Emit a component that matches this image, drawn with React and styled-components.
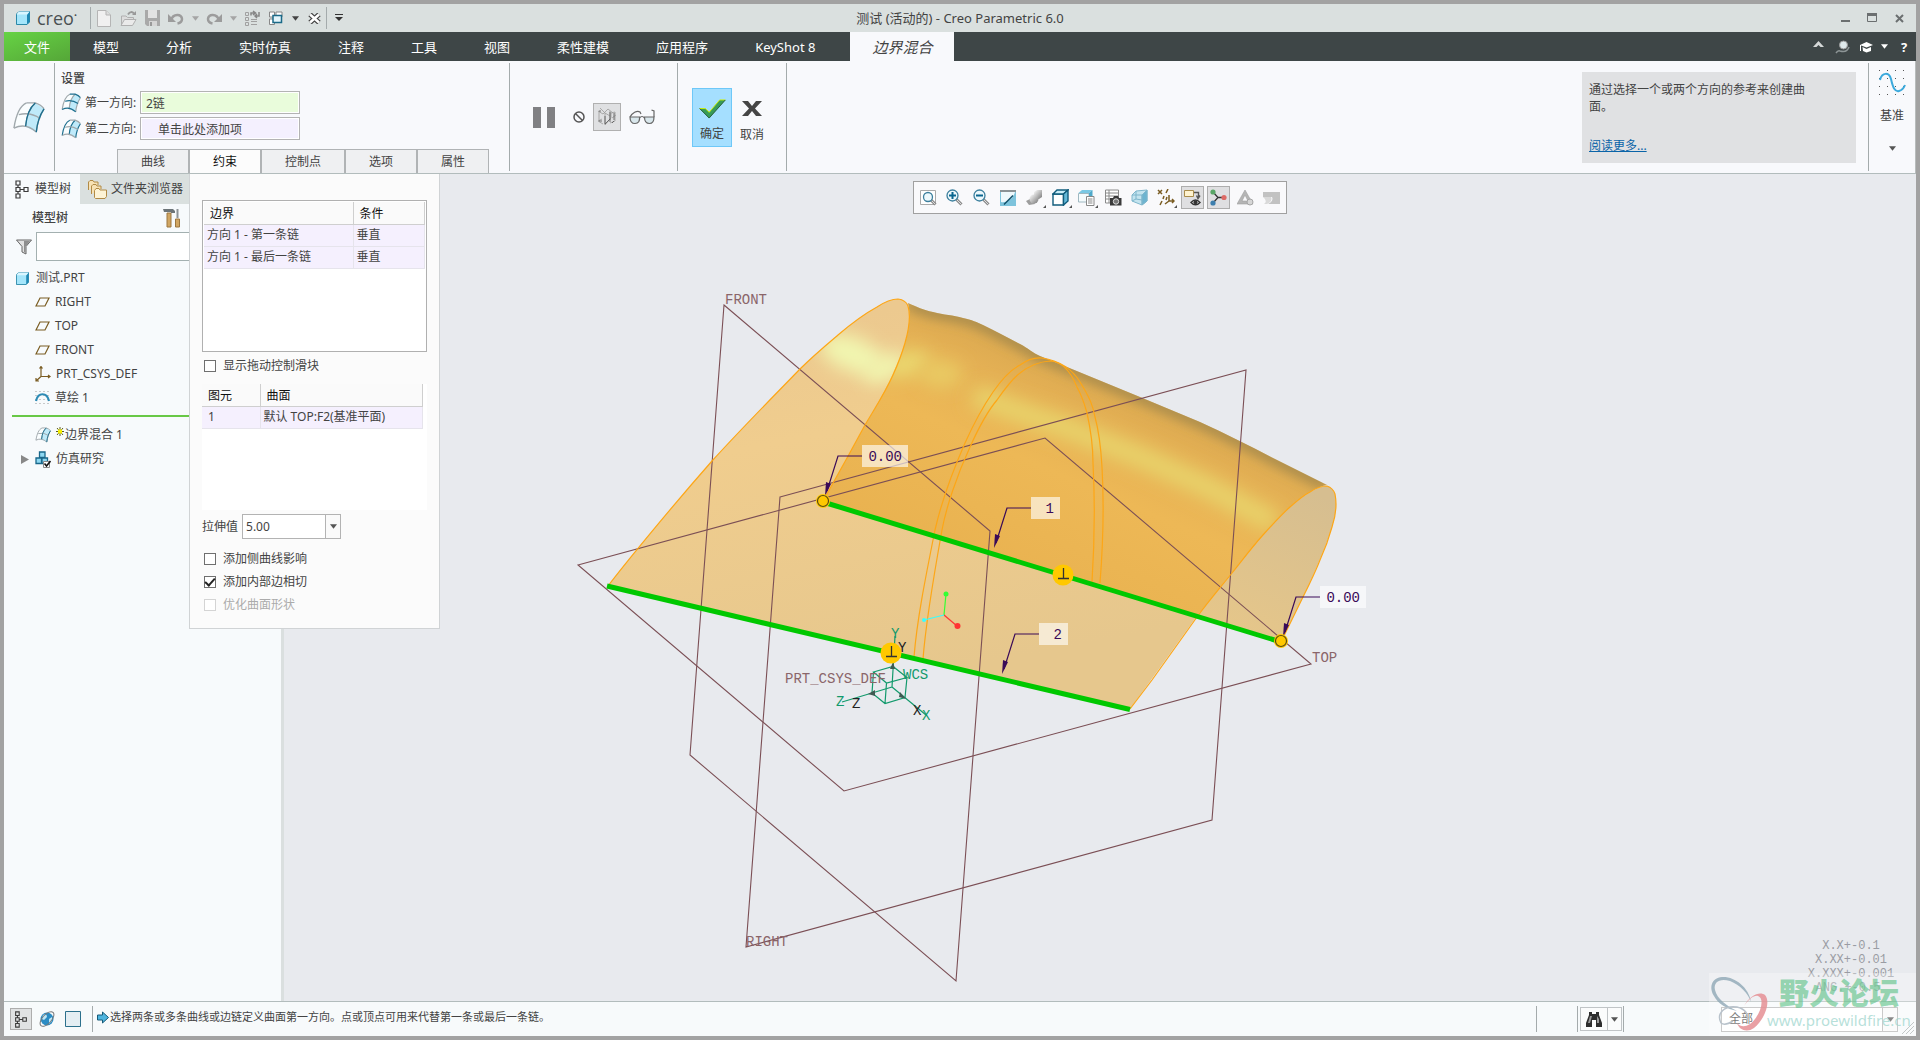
import React from "react";
import styled, { createGlobalStyle, css } from "styled-components";

const GlobalStyle = createGlobalStyle`
  * {
    box-sizing: border-box;
  }
  body {
    margin: 0;
    background: #a2a2a2;
    color: #434343;
    font: 12px/16px "Noto Sans", "Noto Sans CJK SC", sans-serif;
  }
  button, input, select {
    font: inherit;
    color: inherit;
    border-radius: 0;
  }
  button {
    padding: 0;
    border: 0;
    background: none;
  }
  svg {
    display: block;
    flex: none;
  }
`;

const Window = styled.div`
  position: relative;
  display: flex;
  flex-direction: column;
  min-height: 100vh;
  border: 4px solid #a2a2a2;
  background: #e8eaee;
`;

/* ---------- title bar ---------- */

const TitleBar = styled.header`
  display: grid;
  grid-template-columns: 1fr auto 1fr;
  align-items: center;
  height: 28px;
  background: #dae0df;
`;

const QuickAccess = styled.div`
  display: flex;
  align-items: center;
  padding-left: 12px;
`;

const Brand = styled.span`
  width: 52px;
  margin-left: 7px;
  font: 18px/26px "Open Sans", sans-serif;
  color: #4a5052;
  sup {
    font-size: 8px;
    line-height: 0;
  }
`;

const ToolButton = styled.button`
  display: flex;
  align-items: center;
  justify-content: center;
  width: ${(p) => p.$w || 24}px;
  height: 24px;
`;

const Rule = styled.span`
  align-self: stretch;
  width: 1px;
  margin: 2px ${(p) => p.$gap || 0}px;
  background: #a4abac;
`;

const WindowTitle = styled.h1`
  margin: 0;
  font-size: 13px;
  font-weight: 400;
`;

const WindowControls = styled.div`
  display: flex;
  justify-content: flex-end;
  gap: 3px;
  padding-right: 5px;
`;

/* ---------- ribbon tabs ---------- */

const TabStrip = styled.nav`
  display: flex;
  height: 29px;
  background: #3e4647;
  font-size: 13px;
  color: #fff;
`;

const FileTab = styled.button`
  width: 66px;
  margin-right: 23px;
  background: linear-gradient(160deg, #66d344, #55a638);
`;

const RibbonTab = styled.button`
  margin-right: 47px;
`;

const ActiveRibbonTab = styled.button`
  width: 104px;
  margin-left: -12px;
  font-size: 15px;
  font-style: italic;
  color: #434343;
  background: #f8f9fc;
`;

const TabTools = styled.div`
  display: flex;
  align-items: center;
  margin-left: auto;
`;

/* ---------- ribbon ---------- */

const Ribbon = styled.section`
  display: flex;
  height: 113px;
  border-bottom: 1px solid #b2bcbc;
  background: #f8f9fc;
`;

const Group = styled.div`
  display: flex;
  align-items: center;
  width: ${(p) => p.$w}px;
  padding-left: ${(p) => p.$pad || 0}px;
  gap: ${(p) => p.$gap || 0}px;
`;

const Settings = styled.div`
  display: flex;
  flex-direction: column;
  width: 454px;
  padding: 10px 0 0 6px;
`;

const SettingsTitle = styled.h2`
  margin: 0 0 4px;
  font-size: 12px;
  line-height: 16px;
  font-weight: 500;
`;

const Field = styled.label`
  display: flex;
  align-items: center;
  gap: 4px;
  height: 23px;
  margin-bottom: 3px;
  span {
    width: 51px;
    white-space: nowrap;
  }
`;

const Collector = styled.input`
  width: 160px;
  height: 23px;
  padding: 0 ${(p) => (p.$empty ? 17 : 5)}px;
  border: 1px solid #b3b3b3;
  box-shadow: inset 0 0 0 1px #fff;
  background: ${(p) => (p.$empty ? "#f4f0fe" : "#e9fcdb")};
`;

const SubTabs = styled.div`
  display: flex;
  margin: auto 0 0 56px;
`;

const SubTab = styled.button`
  width: ${(p) => p.$w || 72}px;
  height: 24px;
  border: 1px solid #b0b3b5;
  border-bottom: 0;
  background: ${(p) => (p.$active ? "#fcfcfc" : "#eff0f2")};
  color: ${(p) => (p.$active ? "#111" : "#434343")};
`;

const PreviewToggle = styled.button`
  display: flex;
  align-items: center;
  justify-content: center;
  width: 28px;
  height: 28px;
  border: 1px solid #b0b0b0;
  background: #dfe0e2;
`;

const Decision = styled.button`
  display: flex;
  flex-direction: column;
  align-items: center;
  justify-content: space-between;
  width: 40px;
  height: 59px;
  padding: 10px 0 4px;
  ${(p) =>
    p.$primary &&
    css`
      border: 1px solid #6ec8f8;
      background: #a5dfff;
    `}
`;

const HelpBox = styled.aside`
  width: 274px;
  height: 91px;
  margin: 11px 12px 0 auto;
  padding: 9px 48px 0 7px;
  line-height: 17px;
  background: #e0e1e3;
  p {
    margin: 0 0 22px;
  }
  a {
    color: #0a64a8;
  }
`;

const DatumButton = styled.button`
  display: flex;
  flex-direction: column;
  align-items: center;
  width: 47px;
  padding-top: 8px;
  gap: 11px;
  border-right: 1px solid #b8bcbc;
`;

/* ---------- work area ---------- */

const Workspace = styled.main`
  position: relative;
  display: flex;
  flex: 1;
`;

const Navigator = styled.section`
  width: 280px;
  border-right: 3px solid #dadfdf;
  background: #f7fafc;
`;

const NavTabs = styled.div`
  display: flex;
  height: 30px;
  background: #dae0df;
`;

const NavTab = styled.button`
  display: flex;
  align-items: center;
  gap: ${(p) => (p.$active ? 6 : 4)}px;
  padding: 0 ${(p) => (p.$active ? 9 : 7)}px 0 ${(p) => (p.$active ? 11 : 8)}px;
  background: ${(p) => (p.$active ? "#f7fafc" : "transparent")};
`;

const NavHeader = styled.div`
  display: flex;
  align-items: center;
  width: 176px;
  height: 28px;
  padding-left: 28px;
  h2 {
    flex: 1;
    margin: 0;
    font-size: 12px;
    font-weight: 500;
  }
`;

const FilterRow = styled.label`
  display: flex;
  align-items: center;
  gap: 4px;
  padding-left: 12px;
  margin-bottom: 5px;
  input {
    flex: 1;
    min-width: 0;
    height: 29px;
    border: 1px solid #a3b0b0;
    background: #fff;
  }
`;

const Tree = styled.ul`
  margin: 0;
  padding: 0;
  list-style: none;
`;

const TreeItem = styled.li`
  display: flex;
  align-items: center;
  gap: ${(p) => (p.$root ? 7 : 5)}px;
  height: 24px;
  padding-left: ${(p) => (p.$expandable ? 16 : p.$root ? 12 : 31)}px;
`;

const InsertMark = styled.li`
  height: 2px;
  margin: 5px 0 6px 8px;
  background: #68c846;
`;

const NewMark = styled.span`
  display: flex;
  align-items: flex-start;
  gap: 1px;
`;

/* ---------- constraints panel ---------- */

const Panel = styled.section`
  position: absolute;
  top: 0;
  left: 185px;
  width: 251px;
  padding: 26px 12px 12px;
  border: 1px solid #d0d3d5;
  border-top: 0;
  background: #fbfbfb;
`;

const TableBox = styled.div`
  height: ${(p) => p.$h}px;
  margin-bottom: ${(p) => (p.$framed ? 2 : 4)}px;
  padding: ${(p) => (p.$framed ? "1px" : "0")};
  border: ${(p) => (p.$framed ? "1px solid #b0b0b0" : "0")};
  background: ${(p) =>
    p.$framed ? "#fff" : "linear-gradient(#fbfbfb 22px, #fff 22px)"};
`;

const Grid = styled.table`
  width: 100%;
  table-layout: fixed;
  border-collapse: collapse;
  text-align: left;
  tr {
    height: 22px;
  }
  th {
    padding: 2px 6px 0;
    font-weight: 400;
    color: #111;
    background: #fafafa;
    border-right: 1px solid #cfcfcf;
    border-bottom: 1px solid #cfcfcf;
  }
  td {
    padding: 0 3px;
    background: #f5f0fe;
    border-right: 1px solid #e6e4ec;
    border-bottom: 1px solid #e6e4ec;
    white-space: nowrap;
  }
  td:last-child {
    background: #fff;
    border: 0;
  }
`;

const Check = styled.label`
  display: flex;
  align-items: center;
  gap: 7px;
  height: 23px;
  padding-left: 2px;
  color: ${(p) => (p.$off ? "#ababab" : "#434343")};
  & + ${TableBox} {
    margin-top: 7px;
  }
  input {
    appearance: none;
    display: grid;
    place-items: center;
    width: 12px;
    height: 12px;
    margin: 0;
    border: 1px solid ${(p) => (p.$off ? "#d4d4d4" : "#6f6f6f")};
    background: #fff;
  }
  input:checked::before {
    content: "";
    width: 4px;
    height: 8px;
    border: solid #222;
    border-width: 0 2px 2px 0;
    transform: translateY(-1px) rotate(42deg);
  }
`;

const CheckList = styled.div`
  margin-top: 8px;
`;

const SelectRow = styled.label`
  display: flex;
  align-items: center;
  gap: 4px;
`;

const SelectBox = styled.span`
  display: flex;
  width: ${(p) => p.$w}px;
  height: 25px;
  border: 1px solid #b3b3b3;
  background: #fff;
  select {
    flex: 1;
    appearance: none;
    min-width: 0;
    padding: 0 ${(p) => p.$pad || 3}px;
    border: 0;
    background: none;
  }
  i {
    display: flex;
    align-items: center;
    justify-content: center;
    width: 15px;
    border-left: 1px solid #b3b3b3;
    background: #fafafa;
  }
`;

/* ---------- graphics area ---------- */

const Viewport = styled.section`
  position: relative;
  flex: 1;
  min-width: 0;
  background: #e8eaee;
`;

const Scene = styled.svg`
  width: 100%;
  height: 100%;
  text {
    font-family: "Liberation Mono", monospace;
    font-size: 14px;
  }
`;

const ViewTools = styled.div`
  position: absolute;
  top: 7px;
  left: 50%;
  transform: translateX(-50%);
  display: flex;
  align-items: center;
  justify-content: space-between;
  width: 374px;
  height: 33px;
  padding: 0 3px;
  border: 1px solid #a0a0a0;
  background: #f9f9fb;
`;

const ViewButton = styled.button`
  position: relative;
  display: flex;
  align-items: center;
  justify-content: center;
  width: 23px;
  height: 23px;
  border: 1px solid ${(p) => (p.$on ? "#adadad" : "transparent")};
  background: ${(p) => (p.$on ? "#dfdfe1" : "transparent")};
  ${(p) =>
    p.$menu &&
    css`
      &::after {
        content: "";
        position: absolute;
        right: -1px;
        bottom: 0;
        border: solid transparent;
        border-width: 0 0 3px 3px;
        border-bottom-color: #555;
      }
    `}
`;

/* ---------- status bar ---------- */

const StatusBar = styled.footer`
  display: flex;
  align-items: center;
  height: 35px;
  padding: 0 2px 0 6px;
  border-top: 1px solid #b2bcbc;
  background: #f7fafb;
  ${Rule} {
    margin-top: 4px;
    margin-bottom: 4px;
  }
`;

const StatusButton = styled.button`
  display: flex;
  align-items: center;
  justify-content: center;
  width: 22px;
  height: 22px;
  margin-right: 4px;
  border: 1px solid ${(p) => (p.$on ? "#adadad" : "transparent")};
  background: ${(p) => (p.$on ? "#e0e2e3" : "transparent")};
`;

const Message = styled.p`
  display: flex;
  align-items: center;
  gap: 1px;
  flex: 1;
  margin: 0;
  padding: 0 0 4px;
  font-size: 11px;
`;

const FindButton = styled.button`
  display: flex;
  width: 42px;
  height: 24px;
  margin: 0 1px 0 2px;
  border: 1px solid #c0c4c6;
  background: #fbfcfc;
  span {
    display: flex;
    align-items: center;
    justify-content: center;
    width: 27px;
  }
  span + span {
    width: 14px;
    border-left: 1px solid #c0c4c6;
  }
`;

const Spacer = styled.span`
  width: ${(p) => p.$w}px;
`;

const Grip = styled.span`
  align-self: flex-end;
  margin-left: 4px;
  padding-bottom: 2px;
`;

const Watermark = styled.div`
  position: absolute;
  right: 0;
  bottom: 0;
  display: flex;
  width: 207px;
  height: 63px;
  background: rgba(255, 255, 255, 0.3);
  pointer-events: none;
  white-space: nowrap;
`;

const WatermarkText = styled.div`
  margin-left: -2px;
  color: rgba(160, 214, 206, 0.75);
  font-size: 15px;
  line-height: 22px;
  strong {
    display: block;
    padding: 2px 0 2px 12px;
    font-family: "Noto Sans CJK SC", sans-serif;
    font-size: 30px;
    line-height: 32px;
    font-weight: 900;
    color: rgba(96, 195, 137, 0.65);
  }
`;

/* ---------- icons ---------- */

const Caret = ({ color = "#555", w = 8 }) => (
  <svg width={w} height="5" viewBox="0 0 8 5">
    <path d="M0 0H8L4 5Z" fill={color} />
  </svg>
);

const PartIcon = ({ size = 14 }) => (
  <svg width={size} height={size} viewBox="0 0 14 14">
    <path d="M.5 3 3 .5H13.5V11L11 13.5H.5Z" fill="#a5e6fb" stroke="#2b88a8" />
    <path d="M11 3.5 13.5 1V11L11 13.5Z" fill="#1e88b4" />
    <path d="M.5 3.5 3 .5H13.5L11 3.5Z" fill="#d9f6ff" />
  </svg>
);

const NewIcon = () => (
  <svg width="14" height="17" viewBox="0 0 14 17">
    <path d="M.5 .5H9L13.5 5V16.5H.5Z" fill="#f0f0f0" stroke="#b5b5b5" />
    <path d="M9 .5V5H13.5" fill="#ddd" stroke="#b5b5b5" />
  </svg>
);

const OpenIcon = () => (
  <svg width="17" height="17" viewBox="0 0 17 17" fill="none">
    <path d="M1.5 15V6H6L7.5 7.5H13.5V9" fill="#ddd" stroke="#b0b0b0" />
    <path d="M1 15.5 4.5 9.5H16L12.5 15.5Z" fill="#eaeaea" stroke="#b0b0b0" />
    <path d="M8 4.5C10 1.5 12 1.5 14 3.5" stroke="#999" strokeWidth="2" />
    <path d="M12 5H16V1Z" fill="#999" />
  </svg>
);

const SaveIcon = () => (
  <svg width="15" height="16" viewBox="0 0 15 16">
    <path d="M0 0H15V16H2L0 14Z" fill="#a9a9a9" />
    <path d="M3 0H12V8H3Z" fill="#e2e2e2" />
    <path d="M4 11H12V16H4Z" fill="#d5d5d5" />
    <path d="M5 12H7V16H5Z" fill="#999" />
  </svg>
);

const UndoIcon = ({ flip }) => (
  <svg width="16" height="13" viewBox="0 0 16 13">
    <g transform={flip ? "matrix(-1 0 0 1 16 0)" : undefined}>
      <path d="M3 8C5 1.5 14 1.5 14 7C14 9.5 12 11 9.5 11.5" fill="none" stroke="#9c9c9c" strokeWidth="2.5" />
      <path d="M0 2V10H8Z" fill="#9c9c9c" />
    </g>
  </svg>
);

const RegenIcon = () => (
  <svg width="16" height="17" viewBox="0 0 16 17" fill="none" stroke="#a0a0a0">
    <path d="M1.5 2.5H4.5V5.5H1.5ZM1.5 7.5H4.5V10.5H1.5ZM1.5 12.5H4.5V15.5H1.5Z" />
    <path d="M7 9.5H13M7 11.5H13M7 14.5H13" />
    <path d="M7 5.5V3H11M9 1 11.5 3 9 5M15 2V6H11M13 4 11 6 13 8" stroke="#858585" strokeWidth="1.5" />
  </svg>
);

const WindowsIcon = () => (
  <svg width="16" height="15" viewBox="0 0 16 15">
    <path d="M1.5 1H6.5V6H1.5ZM8 1H14V6H8ZM1.5 8H6.5V13.5H1.5Z" fill="#fff" stroke="#888" />
    <path d="M5 4.5H13.5V11.5H5Z" fill="#e3f5fb" stroke="#1b6a88" strokeWidth="1.5" />
  </svg>
);

const CrossIcon = () => (
  <svg width="13" height="11" viewBox="0 0 13 11">
    <path d="M2 1.5 11 9.5M11 1.5 2 9.5" stroke="#444" strokeWidth="5" />
    <path d="M2 1.5 11 9.5M11 1.5 2 9.5" stroke="#fff" strokeWidth="2.5" />
  </svg>
);

const BlendIcon = ({ size = 20, dir }) => {
  const edge = "#1d6f8f";
  const dim = "#a0a8ac";
  return (
    <svg width={size} height={size} viewBox="0 0 34 34" fill="none" strokeWidth={size > 25 ? 1.4 : 2}>
      <path d="M2 26C4 14 9 4 16 2H24L33 8C29 15 26 23 25 32L13 26Z" fill="#fafdfe" />
      <path d="M24 2 33 8C29 15 26 23 25 32L13 26C15 15 18 7 24 2Z" fill="#bfeafa" />
      <path d="M2 28C4 15 8 5 15 2M14 26C15 15 18 7 24 2M25 32C26 22 29 14 33 8" stroke={dir === 2 ? edge : dim} />
      <path d="M15 2H24Q30 4 33 8M7 14Q19 11 29 18M2 28Q14 22 25 32" stroke={dir === 1 ? edge : dim} />
      {!dir && <path d="M24 2C18 7 15 15 14 26M33 8C29 14 26 22 25 32" stroke={edge} />}
    </svg>
  );
};

const PauseIcon = () => (
  <svg width="22" height="21" viewBox="0 0 22 21" fill="#808083">
    <path d="M0 0H8V21H0ZM14 0H22V21H14Z" />
  </svg>
);

const NoneIcon = () => (
  <svg width="12" height="12" viewBox="0 0 12 12" fill="none" stroke="#555" strokeWidth="1.5">
    <circle cx="6" cy="6" r="5" />
    <path d="M2.5 2.5 9.5 9.5" />
  </svg>
);

const WireIcon = () => (
  <svg width="20" height="18" viewBox="0 0 20 18" fill="none" stroke="#9a9a9a" strokeWidth=".8">
    <path d="M1 3 6 6M2 3V13M1 13 6 16M6 6 11 1M3 0 8 5M8 5V17M8 17 14 10M14 10V5M8 5 13 8M11 1 16 5" />
    <path d="M13 3V12M18 4V13M13 15 18 13M15 10 19 7M14 5 18 4M1 13 5 11" />
    <path d="M2 3H4M2 13H5M8 8V16L13 11M13 4V14M17 5V12M15 15 17 13" stroke="#555" />
  </svg>
);

const GlassesIcon = () => (
  <svg width="26" height="16" viewBox="0 0 26 16" fill="#d9e7ec" stroke="#666" strokeWidth="1.2">
    <path d="M1 8H10.5C11 12 9.500 14.500 6 14.500C2.500 14.500 1 12 1 8ZM15.500 8H25C25 12 24 14.500 20.500 14.500C17 14.500 15.500 12 15.500 8Z" />
    <path d="M1 8C3 4 8 1 11 3L12 5M10.500 9Q13 6 15.500 9M25 8V2L22.500 1" fill="none" />
  </svg>
);

const OkIcon = () => (
  <svg width="29" height="20" viewBox="0 0 29 21">
    <path d="M1 10H7L11 14 22 1H28L11 20Z" fill="#379b58" />
    <path d="M1 10H7L11 14 22 1H28" fill="none" stroke="#cdee00" />
    <path d="M28 1 11 20 1 10" fill="none" stroke="#245a34" />
  </svg>
);

const CancelIcon = () => (
  <svg width="20" height="20" viewBox="0 -3 20 20">
    <path d="M0 0H6L10 5 14 0H20L13 7.500 20 15H14L10 10 6 15H0L7 7.500Z" fill="#454545" />
  </svg>
);

const DatumIcon = () => (
  <svg width="28" height="28" viewBox="0 0 28 28">
    {[1, 9, 17, 25].map((y) =>
      [1, 9, 17, 25].map((x) => <rect key={`${x}-${y}`} x={x} y={y} width="1" height="1" fill="#555" />)
    )}
    <path d="M2 11C4 3 11 3 13 10C15 19 17 23 21 22Q25 21 27 16" fill="none" stroke="#3ba9dc" strokeWidth="2" />
  </svg>
);

const TreeIcon = ({ h = 19 }) => (
  <svg width="14" height={h} viewBox="0 0 14 19" fill="none" stroke="#3a3a3a" strokeWidth="1.2">
    <path d="M1 1H5V5H1ZM1 7.5H5V11.5H1ZM1 14H5V18H1ZM9 7.5H13V11.5H9ZM3 5V7.5M3 11.5V14M5 9.5H9" />
  </svg>
);

const FoldersIcon = () => (
  <svg width="19" height="19" viewBox="0 0 19 19" fill="#f7e2b5" stroke="#b18a45">
    <path d="M.5 10V2L2 .5H5L6 2H10V5" />
    <path d="M3.5 14V6L5 4.5H8L9 6H13V9" />
    <path d="M6.5 17.5V10.5L8 8.5H11L12 10H18.5V16.5L17 18.5H7.5Z" fill="#fdf3d5" />
  </svg>
);

const HammerIcon = () => (
  <svg width="17" height="20" viewBox="0 0 17 20">
    <path d="M0 1H10L12 3V5H8V4H1Z" fill="#6c7478" />
    <path d="M4 5H8V19H4Z" fill="#d1a663" stroke="#9c7740" />
    <path d="M13.500 1H15.500V10H13.500Z" fill="#8c9397" />
    <path d="M12.500 11H16.500V19H12.500Z" fill="#d1a663" stroke="#9c7740" />
  </svg>
);

const FunnelIcon = () => (
  <svg width="16" height="16" viewBox="0 0 16 16">
    <path d="M.5 1H15.5L10 7.5V15L6 13V7.5Z" fill="#e1e1e1" stroke="#666" />
    <path d="M8 2H14L9.5 7.5V14L8 13Z" fill="#8e8e8e" />
  </svg>
);

const PlaneIcon = () => (
  <svg width="15" height="10" viewBox="0 0 15 10">
    <path d="M1 9 5 1H14L10 9Z" fill="none" stroke="#7a5c22" strokeWidth="1.2" />
  </svg>
);

const CsysIcon = () => (
  <svg width="16" height="16" viewBox="0 0 16 16" fill="none" stroke="#7a5c22" strokeWidth="1.2">
    <path d="M6 1V10.5H15M6 10.5 1 15M4.5 2.5 6 .5 7.5 2.5M13 9 15 10.5 13 12M1 12V15H4" />
  </svg>
);

const SketchIcon = () => (
  <svg width="15" height="14" viewBox="0 0 15 14">
    {[1, 5, 9, 13].map((x) => (
      <path key={x} d={`M${x} 0V1M${x} 4V5M${x} 8V9M${x} 12V13`} stroke="#999" />
    ))}
    <path d="M1 10C3 1 12 1 14 10" fill="none" stroke="#2d8bb5" strokeWidth="2.2" />
  </svg>
);

const StudyIcon = () => (
  <svg width="16" height="17" viewBox="0 0 16 17">
    <path d="M4.5 1H10V6.5H4.5ZM1 7H6.5V12.5H1ZM7 7H12.5V12.5H7Z" fill="#8ed8f2" stroke="#19678a" strokeWidth="1.3" />
    <path d="M8.5 10.5H14.5V16.5H8.5Z" fill="#fff" stroke="#888" />
    <path d="M9.5 12.5 11.5 15 15.5 10" fill="none" stroke="#111" strokeWidth="1.6" />
  </svg>
);

const StarIcon = () => (
  <svg width="8" height="9" viewBox="0 0 8 9">
    <path d="M4 0V9M0 4.5H8M1 1 7 8M7 1 1 8" stroke="#4a4a00" strokeWidth=".9" />
    <path d="M2 2.500H6V6.500H2Z" fill="#f7f000" />
  </svg>
);

const ZoomIcon = ({ sign, boxed }) => (
  <svg width="17" height="17" viewBox="0 0 17 17">
    {boxed && <path d="M.5 1.5H15.5V15.5H.5Z" fill="#fff" stroke="#aaa" />}
    <path d="M10 10 15.5 15.5" stroke="#8c8c8c" strokeWidth="3" />
    <path d="M10 10 15.5 15.5" stroke="#ddd" strokeWidth="1" />
    <circle cx={boxed ? 8 : 6.5} cy={boxed ? 8 : 6.5} r={boxed ? 4.5 : 5.5} fill="#edf8fc" stroke="#3c7f9d" strokeWidth="1.3" />
    {sign && <path d={sign === "+" ? "M3 6.5H10M6.5 3V10" : "M3 6.5H10"} stroke="#0a6690" strokeWidth="2" />}
  </svg>
);

const RepaintIcon = () => (
  <svg width="16" height="16" viewBox="0 0 16 16">
    <path d="M0 0H16V16H0Z" fill="#7dc3dc" />
    <path d="M1 2H15Q14 7 9 10Q5 13 1 12Z" fill="#eef8fc" />
    <path d="M0 0H16V2H0Z" fill="#8a9296" />
    <path d="M4 14.500 13 5.500" stroke="#124f68" strokeWidth="1.5" />
  </svg>
);

const ShadeIcon = () => (
  <svg width="17" height="16" viewBox="0 0 17 16">
    <defs>
      <linearGradient id="ball" x1="0" y1="0" x2="1" y2="1">
        <stop offset="0" stopColor="#fff" />
        <stop offset="1" stopColor="#777" />
      </linearGradient>
    </defs>
    <path d="M0 11 6 8 9 14 3 15Z" fill="#9d9d9d" />
    <path d="M8 2 11 0H16V7L13 9H8Z" fill="url(#ball)" />
    <circle cx="8" cy="9" r="4.5" fill="url(#ball)" />
  </svg>
);

const BoxIcon = () => (
  <svg width="17" height="17" viewBox="0 0 17 17" stroke="#115c7c" strokeWidth="1.4">
    <path d="M1 5H11.5V16H1Z" fill="#fff" />
    <path d="M1 5 5 1H16L11.5 5Z" fill="#c8edf8" />
    <path d="M11.5 5 16 1V12L11.5 16Z" fill="#64b9d8" />
  </svg>
);

const SavedViewIcon = () => (
  <svg width="17" height="17" viewBox="0 0 17 17">
    <path d="M.5 4.5H11V13H.5Z" fill="#f5fbfd" stroke="#9fb8c1" />
    <path d="M.5 4 4 1H14.5L11 4Z" fill="#79c8e4" />
    <path d="M11 4 14.500 1V8H11Z" fill="#4fa9ca" />
    <path d="M8.5 7.5H16V16.5H8.5Z" fill="#fff" stroke="#888" />
    <path d="M10 10H14.5M10 12H14.5M10 14H14.5" stroke="#888" />
  </svg>
);

const CameraListIcon = () => (
  <svg width="17" height="17" viewBox="0 0 17 17">
    <path d="M.5 1H13.5V14H.5ZM.5 4H13.5M.5 7H13.5M.5 10H13.5M4 1V14" fill="#fff" stroke="#8a8a8a" />
    <path d="M5 9H8L9 7H13L14 9H16.5V16.5H5Z" fill="#3a3a3a" />
    <circle cx="11" cy="12.5" r="2.7" fill="#777" stroke="#ddd" />
  </svg>
);

const PerspectiveIcon = () => (
  <svg width="17" height="17" viewBox="0 0 17 17" stroke="#7eb6cc">
    <path d="M1 6 5 2 16 1V12L11 16 1 12Z" fill="#c4e4ef" />
    <path d="M11 6 16 1V12L11 16Z" fill="#6db4d0" />
    <path d="M1 6 11 6V16M5 2V10L1 12M5 10 11 11" fill="none" />
  </svg>
);

const DatumFilterIcon = () => (
  <svg width="18" height="17" viewBox="0 0 18 17" fill="none" stroke="#7a5c22" strokeWidth="1.500">
    <path d="M1 1 5 5M5 1 1 5M11 0 9 4M7 7 6 10M5 12 3 16M12 6V12H17M12 12 8 15M15 10 17 12 15 14M10 8 9 11" />
  </svg>
);

const AnnotationIcon = () => (
  <svg width="17" height="17" viewBox="0 0 17 17">
    <path d="M.5 1.5H9.5V7.5H.5Z" fill="#fff3cf" stroke="#a98d4c" />
    <path d="M10 3.5H14.5V8M12.5 6.5 14 9.5 16 6.5" fill="none" stroke="#555" strokeWidth="1.4" />
    <path d="M7 13.5Q11.5 8.5 16 13.5Q11.5 18 7 13.5Z" fill="#fff" stroke="#333" strokeWidth="1.4" />
    <circle cx="11.5" cy="13.3" r="2" fill="#333" />
  </svg>
);

const SpinIcon = () => (
  <svg width="17" height="17" viewBox="0 0 17 17">
    <path d="M3 3 8 8.5 3 14M8 8.5H14" fill="none" stroke="#333" strokeWidth="1.3" />
    <circle cx="3" cy="3" r="2.6" fill="#5aa667" />
    <circle cx="3" cy="14" r="2.6" fill="#3d7fae" />
    <circle cx="14" cy="8.5" r="2.6" fill="#dd6a66" />
  </svg>
);

const AnalysisIcon = () => (
  <svg width="17" height="17" viewBox="0 0 17 17">
    <path d="M8 1 16 15H0ZM8 6 5 12H11Z" fill="#b5b5b5" fillRule="evenodd" stroke="#a0a0a0" strokeWidth=".6" />
    <circle cx="13" cy="13" r="3" fill="#d6d6d6" stroke="#a5a5a5" />
  </svg>
);

const FlagIcon = () => (
  <svg width="17" height="12" viewBox="0 0 17 12">
    <path d="M0 0H17V12H5Q11 9 9 5H0Z" fill="#c2c2c2" />
    <path d="M0 5H8Q10 9 4 12H1Q5 9 0 5Z" fill="#d9d9d9" />
  </svg>
);

const GlobeIcon = () => (
  <svg width="18" height="18" viewBox="0 0 18 18">
    <circle cx="9" cy="9" r="6.5" fill="#2b8cc4" />
    <path d="M5 5Q9 3 9 7L6 10 4 9ZM11 9 14 7V11L11 14Z" fill="#bde6f5" />
    <ellipse cx="9" cy="9" rx="9" ry="4.5" transform="rotate(-48 9 9)" fill="none" stroke="#777" />
  </svg>
);

const BlankIcon = () => (
  <svg width="16" height="16" viewBox="0 0 16 16">
    <path d="M.5 .5H15.5V15.5H.5Z" fill="#e4eef3" stroke="#2c708c" />
  </svg>
);

const ArrowIcon = () => (
  <svg width="12" height="13" viewBox="0 0 12 13">
    <path d="M.5 4H5.5V1L11.5 6.5 5.5 12V9H.5Z" fill="#4eb4de" stroke="#155a78" />
  </svg>
);

const BinocularsIcon = () => (
  <svg width="16" height="15" viewBox="0 0 16 15">
    <path d="M3 0H6V2H10V0H13V3L16 11V15H10V8H6V15H0V11L3 3Z" fill="#2e2e2e" />
    <path d="M4 4 2 11H4L6 4ZM11 4V11H13V7Z" fill="#9a9a9a" />
  </svg>
);

/* ---------- model drawing ---------- */

const LEFT_UP = "M608 586C624 565 668 511 712 461C742 428 768 402 800 369C813 356 825 346 838 335C852 323 866 313 877 307Q889 299 898 299";
const LEFT_DOWN = "Q906 300 908 306C911 316 909 329 905 343C901 357 898 364 893 375C885 393 875 408 865 425L847 458L823 501";
const RIGHT_UP = "M1130 709L1152 680L1197 617C1208 602 1220 588 1232 573C1244 558 1253 546 1263 535C1272 525 1281 515 1290 507C1298 500 1304 495 1310 492Q1319 486 1327 486";
const RIGHT_DOWN = "Q1333 488 1335 494C1337 504 1336 515 1332 527C1329 538 1325 549 1320 560C1315 573 1309 585 1303 597L1281 642";
const RIDGE = "M908 303C917 307 923 310 933 312C944 315 953 315 963 318C972 320 977 322 983 325C996 331 1008 338 1020 344C1028 348 1033 353 1040 356L1067 367L1140 397L1200 422C1226 434 1250 446 1273 458L1327 485";
const OUTER = `${RIDGE}C1318 486 1304 495 1290 507C1272 523 1252 549 1232 573L1197 616L823 501L847 458L865 425C885 393 898 364 905 343C909 329 911 316 908 303Z`;
const LEFT_FACE = `${LEFT_UP}${LEFT_DOWN}L1197 616L1130 709Z`;
const RIGHT_FACE = "M1197 616L1232 573C1252 549 1272 523 1290 507C1304 495 1318 486 1327 486Q1333 488 1335 494C1337 504 1336 515 1332 527C1329 538 1315 573 1303 597L1281 642Z";

const callouts = [
  { x: 862, y: 445, w: 46, text: "0.00" },
  { x: 1031, y: 497, w: 29, text: "1" },
  { x: 1039, y: 623, w: 29, text: "2" },
  { x: 1320, y: 586, w: 46, text: "0.00" },
];

const Callout = ({ x, y, w, text }) => (
  <g>
    <rect x={x} y={y} width={w} height="22" fill="#fff" fillOpacity=".62" />
    <path d={`M${x} ${y + 11}H${x - 24}L${x - 35} ${y + 46}`} fill="none" stroke="#3a0a58" strokeWidth="1.2" />
    <path d={`M${x - 37} ${y + 51}L${x - 36} ${y + 37}L${x - 31} ${y + 39}Z`} fill="#3a0a58" />
    <text x={x + w - 6} y={y + 16} textAnchor="end" fill="#3a0a58">
      {text}
    </text>
  </g>
);

const Model = () => (
  <Scene viewBox="284 174 1632 827" role="img" aria-label="边界混合 1">
    <defs>
      <linearGradient id="inner" x1="830" y1="320" x2="900" y2="680" gradientUnits="userSpaceOnUse">
        <stop offset="0" stopColor="#ecc98f" />
        <stop offset=".3" stopColor="#f0cd8e" />
        <stop offset="1" stopColor="#e6c78d" />
      </linearGradient>
      <linearGradient id="outer" x1="1110" y1="385" x2="1020" y2="592" gradientUnits="userSpaceOnUse">
        <stop offset="0" stopColor="#dba950" />
        <stop offset=".15" stopColor="#e4b054" />
        <stop offset=".45" stopColor="#edb856" />
        <stop offset="1" stopColor="#e9b250" />
      </linearGradient>
      <linearGradient id="end" x1="1310" y1="490" x2="1240" y2="630" gradientUnits="userSpaceOnUse">
        <stop offset="0" stopColor="#d6be90" />
        <stop offset="1" stopColor="#e5c68a" />
      </linearGradient>
      <clipPath id="outerClip">
        <path d={OUTER} />
      </clipPath>
      <clipPath id="innerClip">
        <path d={LEFT_FACE} />
      </clipPath>
      <filter id="soft" x="-30%" y="-60%" width="160%" height="220%">
        <feGaussianBlur stdDeviation="9" />
      </filter>
      <filter id="edge" x="-10%" y="-10%" width="120%" height="120%">
        <feGaussianBlur stdDeviation="6" />
      </filter>
    </defs>

    <path d={LEFT_FACE} fill="url(#inner)" />
    <path d={RIGHT_FACE} fill="url(#end)" />
    <path d={OUTER} fill="url(#outer)" />
    <g clipPath="url(#innerClip)">
      <ellipse cx="852" cy="354" rx="34" ry="17" transform="rotate(22 852 354)" fill="#f1f6b0" filter="url(#soft)" />
      <ellipse cx="886" cy="368" rx="24" ry="12" transform="rotate(-25 886 368)" fill="#f1f6b0" filter="url(#soft)" />
    </g>
    <g clipPath="url(#outerClip)">
      <ellipse cx="905" cy="364" rx="26" ry="13" transform="rotate(-15 905 364)" fill="#ead870" filter="url(#soft)" />
      <ellipse cx="941" cy="374" rx="22" ry="14" fill="#e9ca64" filter="url(#soft)" />
      <path d="M974 394C1000 407 1040 419 1067 428L1140 457L1207 487L1275 523" fill="none" stroke="#e9d86f" strokeWidth="22" strokeOpacity=".85" filter="url(#soft)" />
      <path d={RIDGE} fill="none" stroke="#8b7a4a" strokeWidth="11" strokeOpacity=".7" filter="url(#edge)" />
    </g>

    <g fill="none" stroke="#7b4f55" strokeWidth="1.1">
      <path d="M724 305L990 531L956 981L690 755Z" />
      <path d="M780 497L1246 370L1212 820L746 947Z" />
      <path d="M578 565L1045 438L1311 664L844 791Z" />
    </g>

    <g fill="none" stroke="#fda616" strokeWidth="1.2">
      <path d={LEFT_UP + LEFT_DOWN} />
      <path d={RIGHT_UP + RIGHT_DOWN} />
      <path d="M914 657C917 620 925 580 935 530C940 508 951 475 965 443C974 423 982 408 993 392C1002 379 1010 370 1020 365Q1031 357 1042 358Q1068 362 1080 382C1090 398 1093 406 1095 417C1100 435 1101 450 1102 467Q1105 520 1100 583" />
      <path d="M923 659C926 620 933 580 942 530C946 508 957 475 970 447C979 427 986 413 997 400C1006 387 1012 379 1020 373Q1034 362 1050 361Q1067 362 1077 387C1083 398 1085 406 1087 413C1091 431 1093 448 1093 463Q1096 520 1092 582" />
    </g>

    <g stroke="#00c800" strokeWidth="5">
      <path d="M823 502L1281 642" />
      <path d="M607 586L1130 709.5" />
    </g>

    <g fill="none" stroke="#129a6c" strokeWidth="1.2">
      <path d="M892 687L895 636M892 687L842 702M892 687L926 715" />
      <path d="M873.5 672L893 666.5L907 677.5L886.5 683ZM873.5 672L872 693L885 703.5L905 697.5L907 677.5M886.5 683L885 703.5" />
    </g>
    <path d="M890 669L893 662L895 669ZM868 694L875 690L875 696ZM900 692L906 699L899 697Z" fill="#3f5a52" />
    <g fill="#129a6c">
      <text x="891" y="638">Y</text>
      <text x="903" y="679">WCS</text>
      <text x="836" y="706">Z</text>
      <text x="922" y="720">X</text>
    </g>
    <g fill="#222">
      <text x="898" y="652">Y</text>
      <text x="852" y="708">Z</text>
      <text x="913" y="715">X</text>
    </g>
    <g fill="#8a6569">
      <text x="725" y="304">FRONT</text>
      <text x="1312" y="662">TOP</text>
      <text x="746" y="946">RIGHT</text>
      <text x="785" y="683">PRT_CSYS_DEF</text>
    </g>

    <path d="M944 615L946 594" stroke="#33ff33" strokeWidth="1.2" />
    <path d="M944 615L957 626" stroke="#ff3333" strokeWidth="1.2" />
    <path d="M944 615L924 620" stroke="#33ffff" strokeWidth="1.2" />
    <circle cx="946" cy="594" r="2.5" fill="#33ff33" />
    <circle cx="957.5" cy="626" r="3" fill="#ff3333" />
    <circle cx="924" cy="620" r="2" fill="#33ffff" />

    {callouts.map((c) => (
      <Callout key={`${c.x}-${c.y}`} {...c} />
    ))}

    {[[823, 501], [1281, 641]].map(([x, y]) => (
      <g key={x}>
        <circle cx={x} cy={y} r="7" fill="#ffc800" />
        <circle cx={x} cy={y} r="5.5" fill="#ffc800" stroke="#5a4b10" strokeWidth="1.2" />
      </g>
    ))}
    {[[1063, 575], [891, 653]].map(([x, y]) => (
      <g key={x}>
        <circle cx={x} cy={y} r="10.5" fill="#ffc800" />
        <path d={`M${x + 0.5} ${y - 7}V${y + 4}M${x - 5} ${y + 3.5}H${x + 6}`} stroke="#333" strokeWidth="1.3" />
      </g>
    ))}

    <g fill="#9a9ca3" textAnchor="middle">
      {["X.X+-0.1", "X.XX+-0.01", "X.XXX+-0.001", "ANG.+-0.5"].map((t, i) => (
        <text key={t} x={i === 3 ? 1848 : 1851} y={949 + i * 14} style={{ fontSize: 12 }}>
          {t}
        </text>
      ))}
    </g>
  </Scene>
);

const viewTools = [
  { label: "重新调整", icon: <ZoomIcon boxed /> },
  { label: "放大", icon: <ZoomIcon sign="+" /> },
  { label: "缩小", icon: <ZoomIcon sign="-" /> },
  { label: "重画", icon: <RepaintIcon /> },
  { label: "渲染", icon: <ShadeIcon />, menu: true },
  { label: "显示样式", icon: <BoxIcon />, menu: true },
  { label: "已保存方向", icon: <SavedViewIcon />, menu: true },
  { label: "视图管理器", icon: <CameraListIcon /> },
  { label: "透视图", icon: <PerspectiveIcon /> },
  { label: "基准显示", icon: <DatumFilterIcon />, menu: true },
  { label: "注释显示", icon: <AnnotationIcon />, on: true },
  { label: "旋转中心", icon: <SpinIcon />, on: true },
  { label: "分析", icon: <AnalysisIcon /> },
  { label: "暂停", icon: <FlagIcon /> },
];

const ribbonTabs = ["模型", "分析", "实时仿真", "注释", "工具", "视图", "柔性建模", "应用程序", "KeyShot 8"];

const App = () => (
  <>
    <GlobalStyle />
    <Window>
      <TitleBar>
        <QuickAccess>
          <PartIcon />
          <Brand>
            creo<sup>•</sup>
          </Brand>
          <Rule $gap={1} />
          <ToolButton aria-label="新建"><NewIcon /></ToolButton>
          <ToolButton aria-label="打开"><OpenIcon /></ToolButton>
          <ToolButton aria-label="保存"><SaveIcon /></ToolButton>
          <ToolButton aria-label="撤消"><UndoIcon /></ToolButton>
          <ToolButton $w={14} aria-label="撤消列表"><Caret color="#a5a5a5" w={7} /></ToolButton>
          <ToolButton aria-label="重做"><UndoIcon flip /></ToolButton>
          <ToolButton $w={14} aria-label="重做列表"><Caret color="#a5a5a5" w={7} /></ToolButton>
          <ToolButton aria-label="重新生成"><RegenIcon /></ToolButton>
          <ToolButton aria-label="窗口"><WindowsIcon /></ToolButton>
          <ToolButton $w={14} aria-label="窗口列表"><Caret color="#444" w={7} /></ToolButton>
          <ToolButton aria-label="关闭窗口"><CrossIcon /></ToolButton>
          <Rule />
          <ToolButton aria-label="自定义">
            <svg width="8" height="8" viewBox="0 0 8 8">
              <path d="M0 0H8V1H0ZM0 3H8L4 7Z" fill="#333" />
            </svg>
          </ToolButton>
        </QuickAccess>
        <WindowTitle>测试 (活动的) - Creo Parametric 6.0</WindowTitle>
        <WindowControls>
          <ToolButton aria-label="最小化">
            <svg width="9" height="10"><path d="M0 7H9V9H0Z" fill="#6b6f70" /></svg>
          </ToolButton>
          <ToolButton aria-label="最大化">
            <svg width="10" height="10"><path d="M.5 1V8.5H9.5V1" fill="none" stroke="#6b6f70" /><path d="M0 0H10V3H0Z" fill="#6b6f70" /></svg>
          </ToolButton>
          <ToolButton aria-label="关闭">
            <svg width="9" height="9"><path d="M1 1 8 8M8 1 1 8" stroke="#6b6f70" strokeWidth="2" /></svg>
          </ToolButton>
        </WindowControls>
      </TitleBar>

      <TabStrip>
        <FileTab>文件</FileTab>
        {ribbonTabs.map((t) => (
          <RibbonTab key={t}>{t}</RibbonTab>
        ))}
        <ActiveRibbonTab>边界混合</ActiveRibbonTab>
        <TabTools>
          <ToolButton $w={20} aria-label="折叠功能区">
            <svg width="11" height="12" viewBox="0 0 11 12"><path d="M0 6 5.5 0 11 6H7.5L5.5 4 3.5 6Z" fill="#d5d8d8" /></svg>
          </ToolButton>
          <ToolButton $w={28} aria-label="搜索命令">
            <svg width="15" height="15" viewBox="0 0 15 15">
              <path d="M1 14Q3 11 5 12Q12 14 14 8" fill="none" stroke="#8d9596" strokeWidth="1.5" />
              <circle cx="8.5" cy="6" r="4" fill="#dfeaec" stroke="#999" />
            </svg>
          </ToolButton>
          <ToolButton $w={20} aria-label="学习">
            <svg width="13" height="12" viewBox="0 0 13 12" fill="#fff">
              <path d="M6.5 1 13 4 6.5 6.5 0 4ZM2.5 6 6.5 8 11 6V10L6.5 11.5 3 10ZM0 4H1V10H0Z" />
            </svg>
          </ToolButton>
          <ToolButton $w={16} aria-label="学习列表"><Caret color="#fff" w={7} /></ToolButton>
          <ToolButton aria-label="帮助">
            <b>?</b>
          </ToolButton>
        </TabTools>
      </TabStrip>

      <Ribbon>
        <Group $w={50} $pad={8}>
          <BlendIcon size={33} />
        </Group>
        <Rule />
        <Settings>
          <SettingsTitle>设置</SettingsTitle>
          <Field>
            <BlendIcon dir={1} />
            <span>第一方向:</span>
            <Collector defaultValue="2链" />
          </Field>
          <Field>
            <BlendIcon dir={2} />
            <span>第二方向:</span>
            <Collector $empty defaultValue="单击此处添加项" />
          </Field>
          <SubTabs>
            <SubTab>曲线</SubTab>
            <SubTab $active>约束</SubTab>
            <SubTab $w={84}>控制点</SubTab>
            <SubTab>选项</SubTab>
            <SubTab>属性</SubTab>
          </SubTabs>
        </Settings>
        <Rule />
        <Group $w={167} $pad={23} $gap={8}>
          <PauseIcon />
          <Spacer $w={2} />
          <NoneIcon />
          <PreviewToggle aria-label="预览"><WireIcon /></PreviewToggle>
          <GlassesIcon />
        </Group>
        <Rule />
        <Group $w={108} $pad={14}>
          <Decision $primary><OkIcon />确定</Decision>
          <Decision><CancelIcon />取消</Decision>
        </Group>
        <Rule />
        <HelpBox>
          <p>通过选择一个或两个方向的参考来创建曲面。</p>
          <a href="#more">阅读更多...</a>
        </HelpBox>
        <Rule />
        <DatumButton>
          <DatumIcon />
          基准
          <Spacer />
          <Caret w={7} />
        </DatumButton>
      </Ribbon>

      <Workspace>
        <Navigator>
          <NavTabs>
            <NavTab $active><TreeIcon />模型树</NavTab>
            <NavTab><FoldersIcon />文件夹浏览器</NavTab>
          </NavTabs>
          <NavHeader>
            <h2>模型树</h2>
            <HammerIcon />
          </NavHeader>
          <FilterRow>
            <FunnelIcon />
            <input aria-label="过滤" />
          </FilterRow>
          <Tree>
            <TreeItem $root><PartIcon size={13} />测试.PRT</TreeItem>
            <TreeItem><PlaneIcon />RIGHT</TreeItem>
            <TreeItem><PlaneIcon />TOP</TreeItem>
            <TreeItem><PlaneIcon />FRONT</TreeItem>
            <TreeItem><CsysIcon />PRT_CSYS_DEF</TreeItem>
            <TreeItem><SketchIcon />草绘 1</TreeItem>
            <InsertMark />
            <TreeItem>
              <BlendIcon size={16} />
              <NewMark><StarIcon />边界混合 1</NewMark>
            </TreeItem>
            <TreeItem $expandable>
              <svg width="10" height="9"><path d="M1 0 9 4.5 1 9Z" fill="#888" /></svg>
              <StudyIcon />仿真研究
            </TreeItem>
          </Tree>
        </Navigator>

        <Viewport>
          <Model />
          <ViewTools>
            {viewTools.map((t) => (
              <ViewButton key={t.label} aria-label={t.label} $on={t.on} $menu={t.menu}>
                {t.icon}
              </ViewButton>
            ))}
          </ViewTools>
        </Viewport>

        <Panel>
          <TableBox $framed $h={152}>
            <Grid>
              <colgroup>
                <col width="149" />
                <col width="71" />
                <col />
              </colgroup>
              <thead>
                <tr><th>边界</th><th>条件</th><td /></tr>
              </thead>
              <tbody>
                <tr><td>方向 1 - 第一条链</td><td>垂直</td><td /></tr>
                <tr><td>方向 1 - 最后一条链</td><td>垂直</td><td /></tr>
              </tbody>
            </Grid>
          </TableBox>
          <Check>
            <input type="checkbox" />
            显示拖动控制滑块
          </Check>
          <TableBox $h={126}>
            <Grid>
              <colgroup>
                <col width="58" />
                <col width="162" />
                <col />
              </colgroup>
              <thead>
                <tr><th>图元</th><th>曲面</th><td /></tr>
              </thead>
              <tbody>
                <tr><td>&nbsp;1</td><td>默认 TOP:F2(基准平面)</td><td /></tr>
              </tbody>
            </Grid>
          </TableBox>
          <SelectRow>
            拉伸值
            <SelectBox $w={99}>
              <select defaultValue="5.00">
                <option>5.00</option>
              </select>
              <i><Caret w={7} /></i>
            </SelectBox>
          </SelectRow>
          <CheckList>
            <Check><input type="checkbox" />添加侧曲线影响</Check>
            <Check><input type="checkbox" defaultChecked />添加内部边相切</Check>
            <Check $off><input type="checkbox" disabled />优化曲面形状</Check>
          </CheckList>
        </Panel>
      </Workspace>

      <StatusBar>
        <StatusButton $on aria-label="导航器"><TreeIcon h={17} /></StatusButton>
        <StatusButton aria-label="浏览器"><GlobeIcon /></StatusButton>
        <StatusButton aria-label="全屏"><BlankIcon /></StatusButton>
        <Rule $gap={4} />
        <Message>
          <ArrowIcon />
          选择两条或多条曲线或边链定义曲面第一方向。点或顶点可用来代替第一条或最后一条链。
        </Message>
        <Rule />
        <Spacer $w={40} />
        <Rule />
        <FindButton aria-label="查找">
          <span><BinocularsIcon /></span>
          <span><Caret w={7} /></span>
        </FindButton>
        <Rule />
        <Spacer $w={97} />
        <SelectBox $w={177} $pad={7}>
          <select aria-label="过滤器" defaultValue="全部">
            <option>全部</option>
          </select>
          <i><Caret w={7} /></i>
        </SelectBox>
        <Grip>
          <svg width="12" height="12" viewBox="0 0 12 12">
            <path d="M0 12 12 0M4 12 12 4M8 12 12 8" stroke="#aab0b0" />
          </svg>
        </Grip>
      </StatusBar>

      <Watermark>
        <svg width="60" height="63" viewBox="0 0 60 63" fill="none">
          <path
            d="M42 29C40 14 25 3 13 4C2 5 0 15 5 23C9 31 18 36 28 38C18 33 8 26 6 17C4 8 12 5 21 8C31 12 39 20 42 29Z"
            fill="#8fa7b5"
            fillOpacity=".8"
          />
          <path
            d="M35 33C41 22 51 18 56 22C62 29 56 46 45 55C38 60 30 57 28 50C33 56 41 53 46 46C53 37 55 25 49 23C45 22 40 26 35 33Z"
            fill="#e58f94"
            fillOpacity=".85"
          />
          <path d="M12 50C7 40 16 32 28 34C36 36 40 41 38 47M12 50Q16 53 24 48" stroke="#b8c2cb" strokeWidth="1.5" />
        </svg>
        <WatermarkText>
          <strong>野火论坛</strong>
          www.proewildfire.cn
        </WatermarkText>
      </Watermark>
    </Window>
  </>
);

export default App;
